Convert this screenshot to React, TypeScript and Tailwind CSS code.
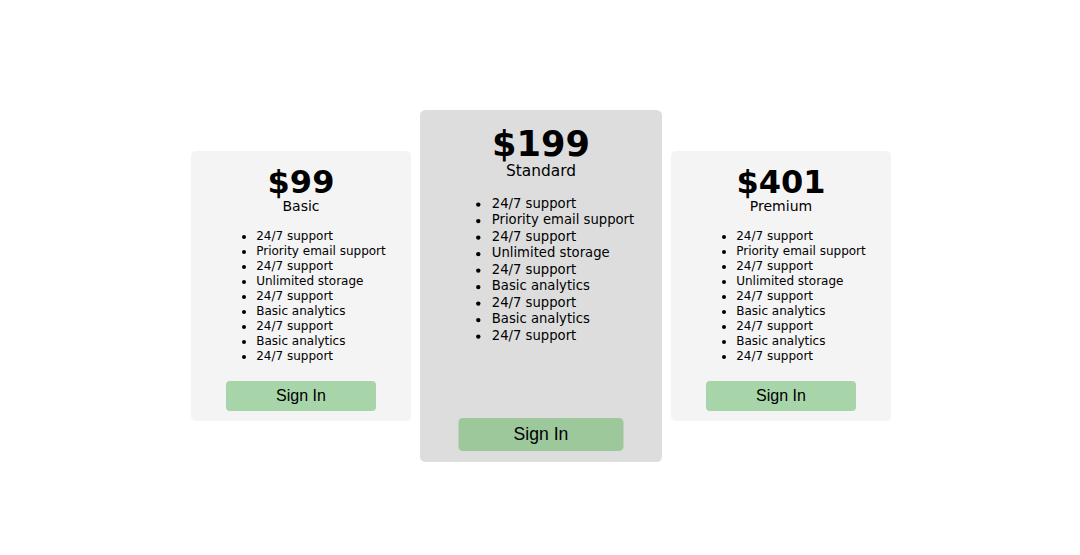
import React from "react";

const features = [
  "24/7 support",
  "Priority email support",
  "24/7 support",
  "Unlimited storage",
  "24/7 support",
  "Basic analytics",
  "24/7 support",
  "Basic analytics",
  "24/7 support",
];

const plans = [
  { id: 1, price: "$99", name: "Basic", featured: false },
  { id: 2, price: "$199", name: "Standard", featured: true },
  { id: 3, price: "$401", name: "Premium", featured: false },
];

const PricingCard: React.FC<{ price: string; name: string; featured: boolean }> = ({
  price,
  name,
  featured,
}) => {
  return (
    <div
      className={`flex w-[220px] flex-col items-center rounded-[5px] px-4 pt-[15px] pb-[10px] text-black ${
        featured ? "h-[320px] scale-110 bg-[#dddddd]" : "bg-[#f4f4f4]"
      }`}
    >
      <h2 className="text-[32px] font-bold leading-none">{price}</h2>
      <h3 className="text-[14px] leading-[16px]">{name}</h3>
      <ul className="mt-[15px] mb-[17px] list-disc pl-10 text-left text-[12px] leading-[15px]">
        {features.map((f, i) => (
          <li key={i}>{f}</li>
        ))}
      </ul>
      <button
        className={`mt-auto h-[30px] w-[150px] rounded-[4px] text-[16px] text-black ${
          featured ? "bg-[#9cc89c]" : "bg-[#a7d4a8]"
        }`}
        style={{ fontFamily: '"Liberation Sans", Arial, sans-serif' }}
      >
        Sign In
      </button>
    </div>
  );
};

const App: React.FC = () => {
  return (
    <div
      className="flex h-[555px] items-center justify-center gap-5 bg-white pt-4 pl-[2px]"
      style={{ fontFamily: '"DejaVu Sans", Verdana, sans-serif' }}
    >
      {plans.map((p) => (
        <PricingCard key={p.id} price={p.price} name={p.name} featured={p.featured} />
      ))}
    </div>
  );
};

export default App;
